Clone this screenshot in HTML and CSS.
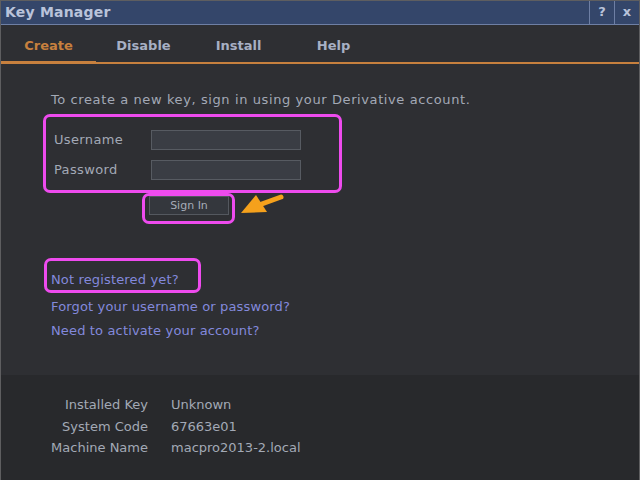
FILE: index.html
```html
<!DOCTYPE html>
<html lang="en">
<head>
  <meta charset="UTF-8" />
  <title>Key Manager</title>
  <link rel="stylesheet" href="styles.css">
</head>
<body>
  <div class="window">
    <!-- Title bar -->
    <div class="title-bar">
      <div class="title">Key Manager</div>
      <div class="title-btn">?</div>
      <div class="title-btn">x</div>
    </div>

    <!-- Tabs -->
    <div class="tabs">
      <div class="tab active">Create</div>
      <div class="tab">Disable</div>
      <div class="tab">Install</div>
      <div class="tab">Help</div>
    </div>

    <!-- Create panel -->
    <section class="panel">
      <p class="intro">To create a new key, sign in using your Derivative account.</p>

      <div class="form-box mark">
        <div class="field">
          <label>Username</label>
          <input type="text" />
        </div>
        <div class="field">
          <label>Password</label>
          <input type="password" />
        </div>
      </div>

      <div class="signin-box mark">
        <button class="btn">Sign In</button>
      </div>

      <div class="links">
        <div class="link-box mark"><a href="#">Not registered yet?</a></div>
        <a href="#">Forgot your username or password?</a>
        <a href="#">Need to activate your account?</a>
      </div>

      <!-- annotation arrow -->
      <svg class="arrow" width="640" height="480" viewBox="0 0 640 480">
        <line x1="259" y1="206" x2="281" y2="198" stroke="#f5a11c" stroke-width="5" stroke-linecap="round" />
        <polygon points="241,214 256,196 267,213" fill="#f5a11c" />
      </svg>
    </section>

    <!-- Machine info -->
    <section class="info">
      <div class="info-grid">
        <span class="key">Installed Key</span><span>Unknown</span>
        <span class="key">System Code</span><span>67663e01</span>
        <span class="key">Machine Name</span><span>macpro2013-2.local</span>
      </div>
    </section>
  </div>
</body>
</html>
```

FILE: styles.css
```css
:root {
  --frame: #5e5e60;
  --title-bg: #34466a;
  --title-line: #6e7fa4;
  --title-text: #b9c3da;
  --panel-bg: #2e2f33;
  --info-bg: #28292c;
  --text: #a3a9b6;
  --tab-text: #a7b0c4;
  --accent: #c7803e;
  --link: #8389dc;
  --mark: #ee4bee;
  --font-family: "DejaVu Sans", Verdana, sans-serif;
}

html, body {
  margin: 0;
  padding: 0;
  background: var(--info-bg);
}

body {
  font-family: var(--font-family);
  font-size: 13px;
  color: var(--text);
}

.window {
  width: 640px;
  height: 480px;
  box-sizing: border-box;
  border: 1px solid var(--frame);
  border-bottom: none;
  display: flex;
  flex-direction: column;
  overflow: hidden;
}

/* Title bar */
.title-bar {
  height: 23px;
  background-color: var(--title-bg);
  border-bottom: 1px solid var(--title-line);
  display: flex;
  align-items: stretch;
}
.title {
  flex: 1;
  padding-left: 4px;
  font-size: 14px;
  font-weight: bold;
  line-height: 23px;
  color: var(--title-text);
  letter-spacing: 0.2px;
}
.title-btn {
  width: 24px;
  border-left: 1px solid var(--title-line);
  text-align: center;
  font-size: 13px;
  font-weight: bold;
  line-height: 22px;
  color: var(--title-text);
}

/* Tabs */
.tabs {
  height: 37px;
  display: flex;
  background-color: var(--panel-bg);
  border-bottom: 2px solid var(--accent);
}
.tab {
  width: 95px;
  text-align: center;
  font-size: 13px;
  font-weight: bold;
  line-height: 42px;
  color: var(--tab-text);
}
.tab.active {
  color: var(--accent);
  border-bottom: 2px solid var(--accent);
  margin-bottom: -1px;
  margin-left: -1px;
  padding-left: 1px;
}

/* Panel */
.panel {
  position: relative;
  height: 311px;
  box-sizing: border-box;
  background-color: var(--panel-bg);
  padding: 28px 0 0 50px;
}
.intro {
  margin: 0;
  line-height: 16px;
  letter-spacing: 0.6px;
}

.mark {
  border: 3px solid var(--mark);
  border-radius: 7px;
}

.form-box {
  margin: 6px 0 0 -8px;
  width: 285px;
  padding: 13px 0 10px 8px;
  display: flex;
  flex-direction: column;
  gap: 10px;
}
.field {
  display: flex;
  align-items: center;
  height: 20px;
}
.field label {
  width: 97px;
  line-height: 16px;
  letter-spacing: 0.35px;
}
.field input {
  width: 150px;
  height: 20px;
  box-sizing: border-box;
  margin: 0;
  background-color: #3a3d44;
  border: 1px solid #575b62;
  color: var(--text);
  font-family: var(--font-family);
}

.signin-box {
  margin: 0 0 0 91px;
  width: 87px;
  height: 25px;
}
.btn {
  display: block;
  margin: 0 0 0 4px;
  width: 80px;
  height: 19px;
  padding: 0;
  background-color: #34373d;
  border: 1px solid #54585f;
  color: #a6acb8;
  font-family: var(--font-family);
  font-size: 11px;
  line-height: 17px;
}

.links {
  margin-top: 34px;
  display: flex;
  flex-direction: column;
}
.links a {
  color: var(--link);
  text-decoration: none;
  line-height: 16px;
  letter-spacing: 0.15px;
}
.link-box {
  margin-left: -7px;
  width: 147px;
  padding: 11px 0 2px 4px;
  margin-bottom: 6px;
}
.links > a + a {
  margin-top: 8px;
}

.arrow {
  position: absolute;
  top: -65px;
  left: -1px;
  pointer-events: none;
}

/* Info */
.info {
  flex: 1;
  background-color: var(--info-bg);
  padding-top: 19px;
}
.info-grid {
  display: grid;
  grid-template-columns: 147px auto;
  column-gap: 23px;
  line-height: 21.5px;
}
.info-grid .key {
  text-align: right;
}
```
